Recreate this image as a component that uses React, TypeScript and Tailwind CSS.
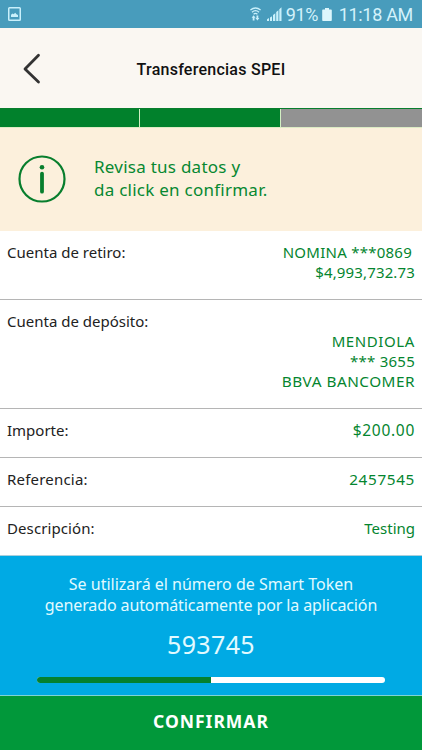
import type { ReactNode } from 'react';

function PictureIcon() {
  return (
    <svg width="13" height="14" viewBox="0 0 13 14" fill="none">
      <rect x="0.75" y="0.75" width="11.5" height="12.5" rx="0.8" stroke="#c9f0fb" strokeWidth="1.5" />
      <path d="M3 10V7.7l1.7-1.2 1 .8 1.5-1.6 1.3 1.5 1.5.8v2z" fill="#c9f0fb" />
    </svg>
  );
}

function WifiIcon() {
  return (
    <svg width="11" height="14" viewBox="0 0 11 14" fill="none" stroke="#c9f0fb" strokeWidth="1.3">
      <path d="M0.4 3Q5.5-1 10.6 3" />
      <path d="M2 5.2Q5.5 2.2 9 5.2" />
      <path d="M3.6 7.2Q5.5 5.6 7.4 7.2" />
      <path d="M3.6 8.3 1.6 10.8h1.1v2.7h1.8v-2.7h1.1zM7.4 13.6l2-2.5H8.3V8.5H6.5v2.6H5.4z" fill="#c9f0fb" stroke="none" />
    </svg>
  );
}

function SignalIcon() {
  return (
    <svg width="15" height="14" viewBox="0 0 15 14" fill="#c9f0fb">
      <path d="M0 12.3 2 11v3H0zM3 10.5l2-1.3V14H3zM6 8l2.3-1.8V14H6zM9.2 5l2.2-1.8V14H9.2zM12.3 2.2 14.5.3V14h-2.2z" />
    </svg>
  );
}

function BatteryIcon() {
  return (
    <svg width="10" height="13" viewBox="0 0 10 13" fill="#dcf6fc">
      <path d="M3 0h4v1.5h2q.8 0 .8.8v9.9q0 .8-.8.8H1q-.8 0-.8-.8V2.3q0-.8.8-.8h2z" />
    </svg>
  );
}

function Row({ label, labelClass, className, children }: { label: string; labelClass: string; className: string; children: ReactNode }) {
  return (
    <div className={`flex shrink-0 justify-between border-b px-[7px] pt-[11px] text-[15px] leading-5 ${className}`}>
      <span className={`text-[#222] ${labelClass}`}>{label}</span>
      <div className="flex flex-col items-end text-[#04852f]">{children}</div>
    </div>
  );
}

export default function App() {
  return (
    <div className="flex h-[750px] w-[422px] flex-col overflow-hidden bg-white font-['Noto_Sans',sans-serif]">
      <div className="flex h-7 shrink-0 items-center bg-[#489cbc] pl-2 font-['Roboto',sans-serif] text-[#d3f2fb]">
        <PictureIcon />
        <div className="ml-auto flex items-center pr-[9px]">
          <WifiIcon />
          <span className="ml-[6px]"><SignalIcon /></span>
          <span className="ml-1 w-[34px] whitespace-nowrap pt-[2px] text-[18px] leading-7 tracking-[-0.3px]">91%</span>
          <span className="ml-[2px]"><BatteryIcon /></span>
          <span className="ml-[7px] whitespace-nowrap pt-[2px] text-[18px] leading-7 tracking-[-0.3px]">11:18 AM</span>
        </div>
      </div>

      <header className="grid h-20 shrink-0 grid-cols-[60px_1fr_60px] items-center bg-[#faf7f2]">
        <button className="pl-[22px]">
          <svg width="20" height="32" viewBox="0 0 20 32" fill="none" stroke="#333" strokeWidth="2.8" strokeLinecap="round" strokeLinejoin="round">
            <path d="M16.5 3.2 3 17l13.5 13" />
          </svg>
        </button>
        <h1 className="pt-[3px] text-center font-['Roboto',sans-serif] text-base font-medium tracking-[0.25px] text-[#111]">Transferencias SPEI</h1>
      </header>

      <div className="grid h-5 shrink-0 grid-cols-[139px_140px_141px] gap-px border-t border-[#087e2d] border-b border-b-[#dcebc4] bg-[#d2efc3]">
        <div className="bg-[#01812c]" />
        <div className="bg-[#01812c]" />
        <div className="bg-[#929292]" />
      </div>

      <div className="flex h-[103px] shrink-0 items-center bg-[#fcf0dc] pb-[2px] pl-[18px] text-[#078831]">
        <svg width="48" height="48" viewBox="0 0 48 48" fill="none" stroke="#087e2d">
          <circle cx="24" cy="24" r="22.5" strokeWidth="2.2" />
          <circle cx="24" cy="12.3" r="2.3" fill="#087e2d" stroke="none" />
          <path d="M24 18.7v18" strokeWidth="3.8" strokeLinecap="round" />
        </svg>
        <p className="ml-7 pb-px text-[17px] leading-[23px] tracking-[0.25px]">
          Revisa tus datos y<br />da click en confirmar.
        </p>
      </div>

      <Row label="Cuenta de retiro:" labelClass="" className="h-[69px] border-[#b5b5b5]">
        <span className="pr-[3px] tracking-[0.25px]">NOMINA ***0869</span>
        <span className="tracking-[0.15px]">$4,993,732.73</span>
      </Row>
      <Row label="Cuenta de depósito:" labelClass="" className="h-[109px] border-[#b5b5b5]">
        <span className="mt-5 tracking-[0.6px]">MENDIOLA</span>
        <span className="tracking-[0.25px]">*** 3655</span>
        <span className="text-[15.3px] tracking-[0.5px]">BBVA BANCOMER</span>
      </Row>
      <Row label="Importe:" labelClass="" className="h-[49px] border-[#b5b5b5]">
        <span className="text-[15.5px] tracking-[0.7px]">$200.00</span>
      </Row>
      <Row label="Referencia:" labelClass="tracking-[0.2px]" className="h-[49px] border-[#b5b5b5]">
        <span className="text-[15.3px] tracking-[0.65px]">2457545</span>
      </Row>
      <Row label="Descripción:" labelClass="tracking-[0.1px]" className="h-[49px] border-[#a9cfdc]">
        <span>Testing</span>
      </Row>

      <section className="flex h-[140px] shrink-0 flex-col items-center border-b border-[#7fd3d6] bg-[#00aae4] pt-[18px] text-[#e2faff]">
        <p className="whitespace-nowrap text-center text-base leading-[21px]">
          Se utilizará el número de Smart Token<br />
          <span className="tracking-[-0.11px]">generado automáticamente por la aplicación</span>
        </p>
        <p className="mt-3 text-[25px] leading-8 tracking-[0.35px]">593745</p>
        <div className="mt-[17px] h-[6px] w-[348px] overflow-hidden rounded-full bg-white">
          <div className="h-full w-1/2 bg-[#04812f]" />
        </div>
      </section>

      <button className="flex flex-1 items-center justify-center bg-[#01983a] pb-1 text-[17.5px] font-bold tracking-[1px] text-white">
        CONFIRMAR
      </button>
    </div>
  );
}
